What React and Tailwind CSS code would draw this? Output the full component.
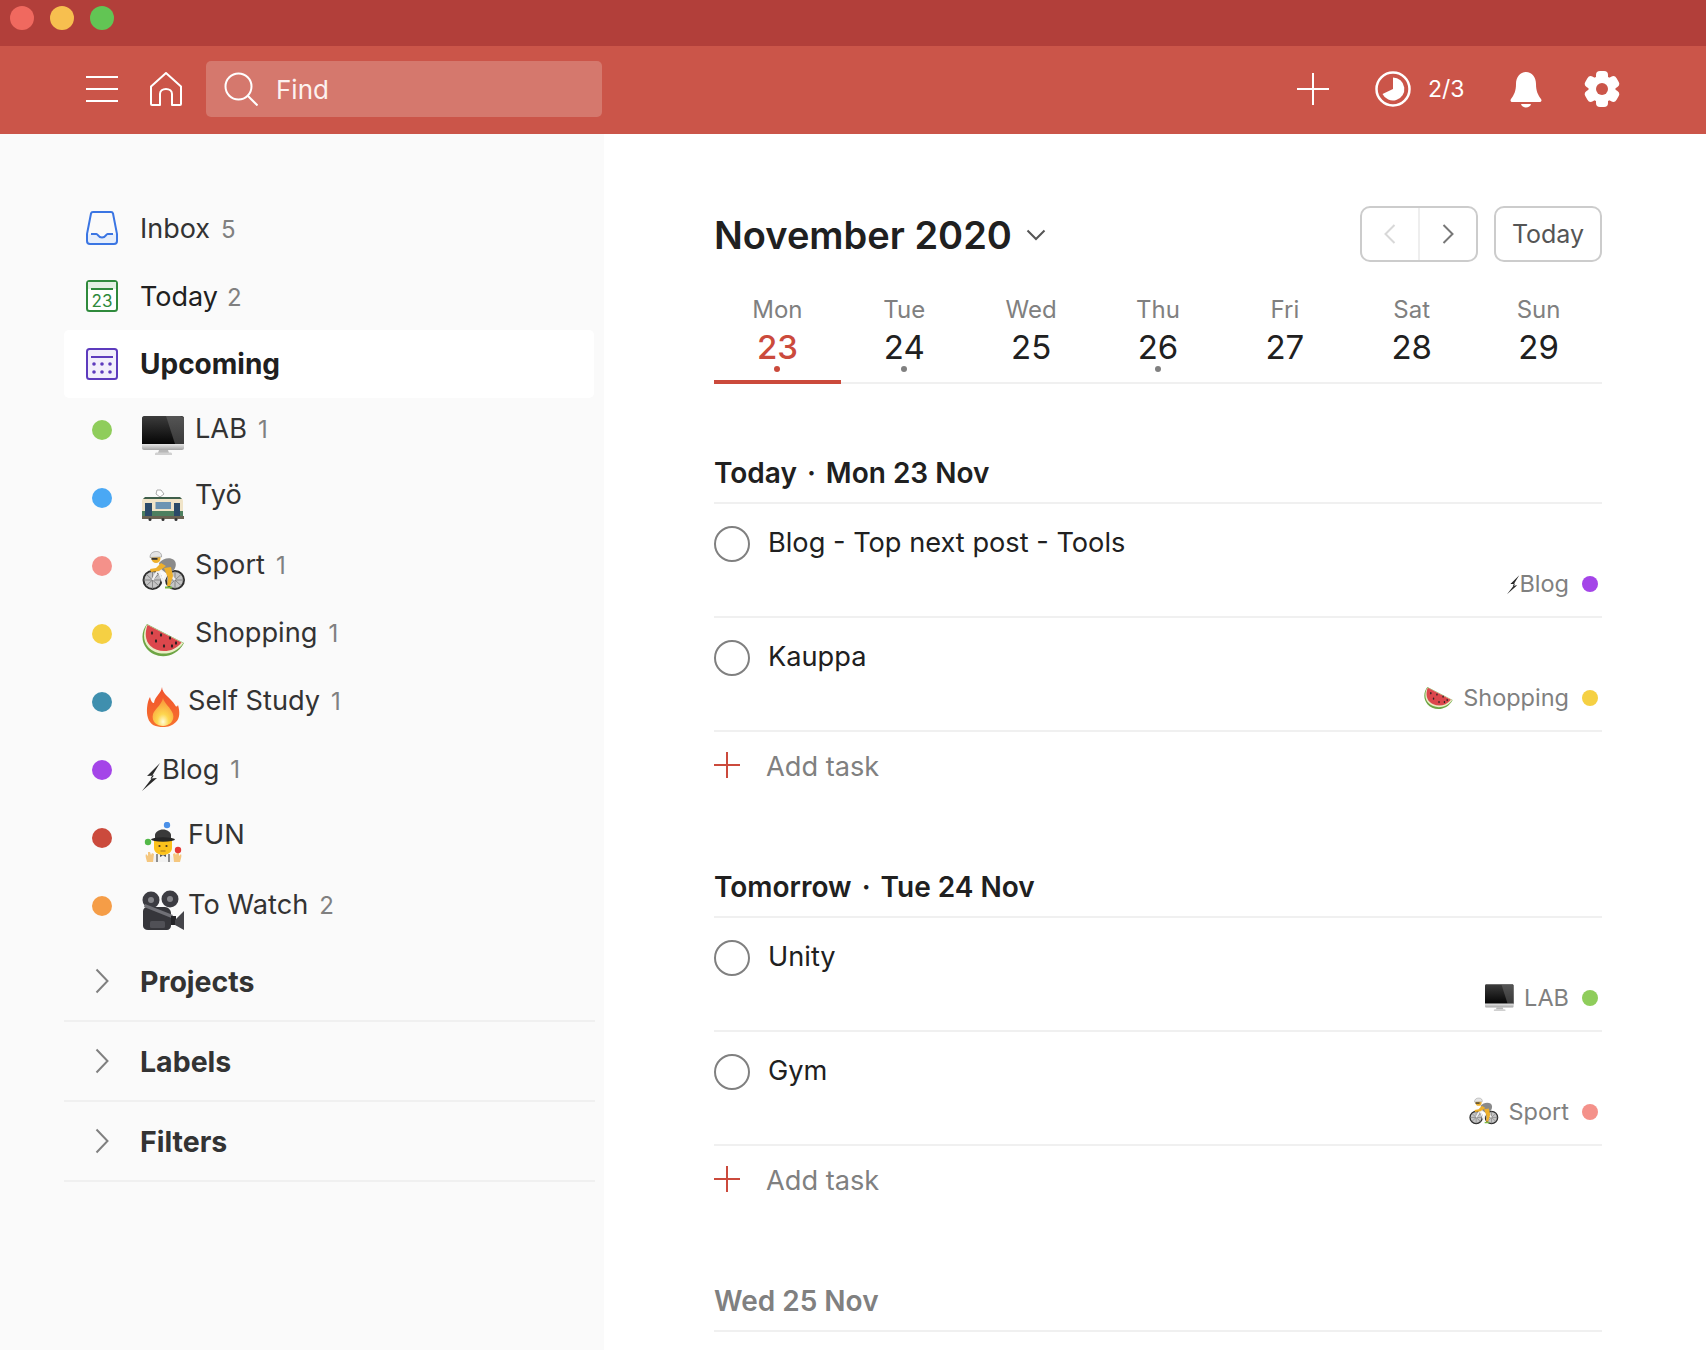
import React from 'react';

const Imac = ({ size = 44 }) => (
    <svg width={size} height={size} viewBox="0 0 44 44" className="shrink-0">
        <defs>
            <linearGradient id="imacScreen" x1="0" y1="0" x2="0" y2="1">
                <stop offset="0" stopColor="#3c3c3c" />
                <stop offset="1" stopColor="#030303" />
            </linearGradient>
            <linearGradient id="imacChin" x1="0" y1="0" x2="0" y2="1">
                <stop offset="0" stopColor="#e6e6e6" />
                <stop offset="1" stopColor="#a4a4a4" />
            </linearGradient>
        </defs>
        <path d="M17 36h9l1 3H16z" fill="#b8b8b8" />
        <path d="M13 39.500c0-.8 1-1 2-1h13c1 0 2 .2 2 1V41H13z" fill="#d0d0d0" />
        <path d="M0 4c0-1 .8-2 2-2h38c1.200 0 2 1 2 2v27H0z" fill="url(#imacScreen)" />
        <path d="M24 2h14l4 2v26h-9z" fill="#6d6d6d" opacity="0.5" />
        <path d="M0 30h42v4c0 1.200-.8 2-2 2H2c-1.200 0-2-.8-2-2z" fill="url(#imacChin)" />
    </svg>
);

const Tram = ({ size = 44 }) => (
    <svg width={size} height={size} viewBox="0 0 44 44" className="shrink-0">
        <path d="M15 8l4-0 3 4-4 3-4-3z" fill="#fff" stroke="#aaa" strokeWidth="1" />
        <path d="M0 36V19c0-2 2-3.500 4-3.500h33c2 0 4 1.500 4 3.500v17z" fill="#f0e4c8" />
        <path d="M3 15h35l2 2H1z" fill="#3f5f4b" />
        <rect x="0" y="29" width="41" height="5" fill="#4d7f5f" />
        <rect x="3" y="21" width="7" height="13" fill="#2b4a68" />
        <rect x="32" y="21" width="6" height="13" fill="#2b4a68" />
        <rect x="13.500" y="20" width="15.500" height="7" fill="#6c94b3" />
        <rect x="-1" y="34" width="43" height="3" fill="#6a6252" />
        <circle cx="8" cy="37.500" r="1.500" fill="#333" />
        <circle cx="21" cy="37.500" r="1.500" fill="#333" />
        <circle cx="34" cy="37.500" r="1.500" fill="#333" />
    </svg>
);

const Bike = ({ size = 44 }) => (
    <svg width={size} height={size} viewBox="0 0 44 44" className="shrink-0">
        <circle cx="10.500" cy="30" r="9" fill="#c4c4c4" stroke="#2e2e2e" strokeWidth="2" />
        <circle cx="33" cy="30" r="9" fill="#c4c4c4" stroke="#2e2e2e" strokeWidth="2" />
        <path d="M10.500 21v18M1.500 30h18M4 24l13 12M17 24L4 36M33 21v18M24 30h18M26.500 24l13 12M39.500 24l-13 12" stroke="#777" strokeWidth="0.8" />
        <path d="M10.500 30L16 20l10 2 7 8M16 20l5 12 5-10" stroke="#f1f1f1" strokeWidth="2.200" fill="none" />
        <path d="M17 13c4-5 11-6 15-3 3 3 2 8-1 11l-7 2-5-4z" fill="#8a8a8a" />
        <path d="M22 18l4 10-1 8h3l3-10-2-9z" fill="#eeb02c" />
        <path d="M19 13l-5 5-6 1 1 3 8-1 7-5z" fill="#eeb02c" />
        <circle cx="14" cy="8.500" r="4.500" fill="#eeb02c" />
        <path d="M8 7.500C8 3 11 1.500 14.500 1.500c3.500 0 5.500 2.500 5 5.500z" fill="#e4e4e4" stroke="#888" strokeWidth="0.6" />
        <rect x="9.500" y="8" width="6" height="1.800" fill="#333" />
        <rect x="23" y="36.500" width="7" height="2" fill="#79b542" />
    </svg>
);

const Melon = ({ size = 44 }) => (
    <svg width={size} height={size} viewBox="0 0 44 44" className="shrink-0">
        <path d="M5 6C0 12 -2 23 5 31c8 10 28 11 37-6z" fill="#6da544" />
        <path d="M5 6.500C1.500 13 0 22 6.500 29.500c8 8.500 26 9 35-4.500z" fill="#e9eec6" />
        <path d="M5.500 7C3 14 2.500 22 8.500 28c8 7.500 23 7 31-3.500z" fill="#dc474c" />
        <g fill="#2d2323">
            <ellipse cx="10" cy="15" rx="1.100" ry="1.700" />
            <ellipse cx="19" cy="17" rx="1.100" ry="1.700" />
            <ellipse cx="28" cy="20" rx="1.100" ry="1.700" />
            <ellipse cx="14" cy="23" rx="1.100" ry="1.700" />
            <ellipse cx="22" cy="28" rx="1.100" ry="1.700" />
            <ellipse cx="30" cy="28" rx="1.100" ry="1.700" />
            <ellipse cx="34" cy="25" rx="1.100" ry="1.700" />
        </g>
    </svg>
);

const Flame = ({ size = 44 }) => (
    <svg width={size} height={size} viewBox="0 0 44 44" className="shrink-0">
        <defs>
            <linearGradient id="flameOuter" x1="0" y1="0" x2="0" y2="1">
                <stop offset="0" stopColor="#f0512c" />
                <stop offset="1" stopColor="#f7722f" />
            </linearGradient>
            <radialGradient id="flameInner" cx="0.5" cy="0.85" r="0.8">
                <stop offset="0" stopColor="#fffbd8" />
                <stop offset="0.35" stopColor="#fdd64f" />
                <stop offset="1" stopColor="#f9943a" />
            </radialGradient>
        </defs>
        <path d="M20 1C20 8 29 12 33 19c1 2 2 2 3 0 2 7 2 13-2 17-4 4-8 5-13 5-7 0-13-2-15-9C4 26 5 16 8 11c1 4 2 6 4 6 1-7 7-9 8-16z" fill="url(#flameOuter)" />
        <path d="M21 12c1 5 8 10 10 16 2 7-4 12-10 12S9 36 11 28c2-5 9-10 10-16z" fill="url(#flameInner)" />
    </svg>
);

const Bolt = ({ size = 44 }) => (
    <svg width={size} height={size} viewBox="0 0 44 44" className="shrink-0">
        <path d="M18 9L5 22l7-.5L0 37 15 24l-6.500.5z" fill="#2a2a2a" />
    </svg>
);

const Juggler = ({ size = 44 }) => (
    <svg width={size} height={size} viewBox="0 0 44 44" className="shrink-0">
        <path d="M10 40c0-6 5-9 11-9s11 3 11 9z" fill="#f2f2f2" />
        <path d="M15 32v8M27 32v8" stroke="#666" strokeWidth="1.400" />
        <path d="M18 32l3 1.500 3-1.500v3l-3-1.500-3 1.500z" fill="#555" />
        <path d="M5 40c-1-4-2-6-1-8l2 2 0-4 2 0 1 3 1-2 2 1-1 8z" fill="#f5c77f" />
        <path d="M38 40c1-4 2-6 1-8l-2 2 0-4-2 0-1 3-1-2-2 1 1 8z" fill="#f5c77f" />
        <path d="M12 16h18v10c0 4-4 7-9 7s-9-3-9-7z" fill="#fcc21b" />
        <circle cx="17.500" cy="24" r="1.100" fill="#4a3520" />
        <circle cx="24.500" cy="24" r="1.100" fill="#4a3520" />
        <path d="M18.500 29h5" stroke="#a8761f" strokeWidth="1" />
        <path d="M13 13c0-3 4-5.500 8-5.500s8 2.500 8 5.500v4H13z" fill="#3a3a3a" />
        <ellipse cx="21" cy="17.500" rx="12" ry="2.200" fill="#262626" />
        <circle cx="25" cy="3" r="3.200" fill="#4a90e8" />
        <circle cx="6" cy="20" r="3.200" fill="#53b848" />
        <circle cx="36" cy="28" r="3.200" fill="#e53935" />
    </svg>
);

const MovieCam = ({ size = 44 }) => (
    <svg width={size} height={size} viewBox="0 0 44 44" className="shrink-0">
        <circle cx="9" cy="10" r="8.500" fill="#3c3c42" />
        <circle cx="28" cy="9" r="8.500" fill="#3c3c42" />
        <circle cx="9" cy="10" r="3" fill="#85858a" />
        <circle cx="28" cy="9" r="3" fill="#85858a" />
        <path d="M1 21c0-2 2-4 4-4h18c3 0 6 3 6 6v13c0 2-2 4-4 4H6c-3 0-5-2-5-4z" fill="#36363b" />
        <path d="M3 14l28 11-1.500 3L2 17z" fill="#707076" />
        <rect x="8" y="31" width="15" height="7" rx="1.500" fill="#505056" />
        <path d="M29 26h5v9h-5z" fill="#232327" />
        <path d="M33 30l9-9v19l-9-5z" fill="#45454a" />
    </svg>
);

const projects = [
    { name: 'LAB', count: 1, color: 'bg-[#8fcd5b]', Icon: Imac, label: 'ml-[9px] mb-[2px]' },
    { name: 'Työ', color: 'bg-[#4aa8f4]', Icon: Tram, label: 'ml-[9px] mb-[6px]' },
    { name: 'Sport', count: 1, color: 'bg-[#f4918a]', Icon: Bike, label: 'ml-[9px] mb-[2px]' },
    { name: 'Shopping', count: 1, color: 'bg-[#f5d043]', Icon: Melon, label: 'ml-[9px] mb-[2px]' },
    { name: 'Self Study', count: 1, color: 'bg-[#3f8fae]', Icon: Flame, label: 'ml-[2px] mb-[2px]' },
    { name: 'Blog', count: 1, color: 'bg-[#a445e8]', Icon: Bolt, label: '-ml-[24px]' },
    { name: 'FUN', color: 'bg-[#cb4a3c]', Icon: Juggler, label: 'ml-[2px] mb-[6px]' },
    { name: 'To Watch', count: 2, color: 'bg-[#f59d47]', Icon: MovieCam, label: 'ml-[2px] mb-[2px]' },
];

const days = [
    ['Mon', 23, true], ['Tue', 24, true], ['Wed', 25, false], ['Thu', 26, true],
    ['Fri', 27, false], ['Sat', 28, false], ['Sun', 29, false],
];

const Chevron = () => (
    <svg width="14" height="26" viewBox="0 0 14 26" fill="none" stroke="#808080" strokeWidth="2">
        <path d="M1.500 1.500L12.500 13 1.500 24.500" />
    </svg>
);

const Task = ({ title, label, Icon, dot, ml }) => (
    <div className="h-[114px] box-border border-b-2 border-[#f0f0f0] pt-[22px]">
        <div className="flex items-center gap-[18px]">
            <div className="w-[36px] h-[36px] rounded-full border-2 border-[#808080]" />
            <span className="text-[27.2px] leading-[36px] text-[#202020] -mt-[2px]">{title}</span>
        </div>
        <div className="mt-[7px] flex items-center justify-end h-[30px] pr-[4px] text-[23.500px] text-[#808080]">
            <Icon size={30} />
            <span className={ml}>{label}</span>
            <span className={`ml-[13px] w-[16px] h-[16px] rounded-full ${dot}`} />
        </div>
    </div>
);

const Heading = ({ title, date }) => (
    <div className={`mt-[60px] h-[60px] box-border border-b-2 border-[#f0f0f0] flex items-center text-[28px] font-semibold ${title ? 'text-[#202020]' : 'text-[#808080]'}`}>
        {title && <span>{title}</span>}
        {title && <span className="mx-[10px]">·</span>}
        <span>{date}</span>
    </div>
);

const AddTask = () => (
    <div className="h-[66px] flex items-center">
        <svg width="26" height="26" viewBox="0 0 26 26" stroke="#cb4a3c" strokeWidth="2">
            <path d="M13 0v26M0 13h26" />
        </svg>
        <span className="ml-[26px] mt-[4px] text-[27.2px] text-[#808080]">Add task</span>
    </div>
);

export default function App() {
    return (
        <div className="w-[1706px] h-[1350px] overflow-hidden bg-white font-['Inter',sans-serif] flex flex-col">
            <div className="h-[46px] shrink-0 bg-[#b23f3a] flex items-start gap-[16px] pl-[10px] pt-[6px]">
                <div className="w-[24px] h-[24px] rounded-full bg-[#f0695f]" />
                <div className="w-[24px] h-[24px] rounded-full bg-[#f7bf4f]" />
                <div className="w-[24px] h-[24px] rounded-full bg-[#62c554]" />
            </div>

            <header className="h-[88px] box-border pb-[2px] shrink-0 bg-[#cb5549] flex items-center pl-[86px] pr-[86px] text-white">
                <svg width="32" height="28" viewBox="0 0 32 28" stroke="#fff" strokeWidth="2">
                    <path d="M0 2h32M0 14h32M0 26h32" />
                </svg>
                <svg className="ml-[32px]" width="32" height="34" viewBox="0 0 32 34" fill="none" stroke="#fff" strokeWidth="2" strokeLinejoin="round">
                    <path d="M1 14.500L16 1l15 13.500V32c0 .6-.4 1-1 1h-8V22c0-3-2.500-5-6-5s-6 2-6 5v11H2c-.6 0-1-.4-1-1z" />
                </svg>
                <div className="ml-[24px] w-[396px] h-[56px] rounded-[5px] bg-[#d5786d] flex items-center pl-[18px]">
                    <svg width="34" height="34" viewBox="0 0 34 34" fill="none" stroke="#fff" strokeWidth="2">
                        <circle cx="14.500" cy="14.500" r="13" />
                        <path d="M24 24l9.500 9.500" />
                    </svg>
                    <span className="ml-[18px] text-[26px] text-[#fdf2f0]">Find</span>
                </div>
                <div className="ml-auto flex items-center">
                    <svg width="32" height="32" viewBox="0 0 32 32" stroke="#fff" strokeWidth="2">
                        <path d="M16 0v32M0 16h32" />
                    </svg>
                    <svg className="ml-[46px]" width="36" height="36" viewBox="0 0 36 36">
                        <circle cx="18" cy="18" r="16.500" fill="none" stroke="#fff" strokeWidth="2.500" />
                        <path d="M18 18V6.500A11.500 11.500 0 1 1 7.500 23z" fill="#fff" />
                    </svg>
                    <span className="ml-[17px] text-[23px] w-[70px]">2/3</span>
                    <svg className="ml-[12px]" width="32" height="37" viewBox="0 0 32 37" fill="#fff">
                        <path d="M16 1c6 0 10 5 10 12 0 7 2 11 5 15 1 1.500.5 3-1.500 3h-27C.5 31 0 29.500 1 28c3-4 5-8 5-15C6 6 10 1 16 1z" />
                        <path d="M11 33h10c-.5 2-2.500 3.500-5 3.500S11.500 35 11 33z" />
                    </svg>
                    <svg className="ml-[42px]" width="36" height="36" viewBox="0 0 36 36">
                        <g fill="#fff">
                            <rect x="12" y="0" width="12" height="36" rx="4" />
                            <rect x="12" y="0" width="12" height="36" rx="4" transform="rotate(60 18 18)" />
                            <rect x="12" y="0" width="12" height="36" rx="4" transform="rotate(120 18 18)" />
                            <circle cx="18" cy="18" r="13.500" />
                        </g>
                        <circle cx="18" cy="18" r="6" fill="#cb5549" />
                    </svg>
                </div>
            </header>

            <div className="flex flex-1 min-h-0">
                <aside className="w-[604px] shrink-0 bg-[#fafafa] pt-[60px] pl-[64px] pr-[10px]">
                    <div className="h-[68px] flex items-center pl-[22px]">
                        <svg width="32" height="34" viewBox="0 0 32 34" fill="none">
                            <path d="M1 23h9l2.500 3h7l2.500-3h9v7c0 2-1 3-3 3H4c-2 0-3-1-3-3z" fill="#e6eefb" />
                            <path d="M7 1h18c1 0 1.800.6 2 1.500L31 23v7c0 2-1 3-3 3H4c-2 0-3-1-3-3v-7L5 2.500C5.200 1.600 6 1 7 1z" stroke="#3a75e3" strokeWidth="2" />
                            <path d="M5 23h5.500c1.500 0 1.500 3.500 5.500 3.500s4-3.500 5.500-3.500H27" stroke="#3a75e3" strokeWidth="2" />
                        </svg>
                        <span className="ml-[22px] mt-[2px] text-[27px] text-[#333]">Inbox</span>
                        <span className="ml-[11px] mt-[4px] text-[24px] text-[#808080]">5</span>
                    </div>
                    <div className="h-[68px] flex items-center pl-[22px]">
                        <svg width="32" height="32" viewBox="0 0 32 32" fill="none">
                            <rect x="1" y="1" width="30" height="30" rx="2.500" fill="#fff" stroke="#2f8a3c" strokeWidth="2" />
                            <rect x="2" y="2" width="28" height="7" fill="#e3f0e3" />
                            <path d="M5 9h22" stroke="#2f8a3c" strokeWidth="2" />
                            <text x="16" y="27" textAnchor="middle" fontFamily="Inter" fontSize="17" fill="#2f8a3c">23</text>
                        </svg>
                        <span className="ml-[22px] mt-[2px] text-[27px] text-[#202020]">Today</span>
                        <span className="ml-[9px] mt-[4px] text-[24px] text-[#808080]">2</span>
                    </div>
                    <div className="h-[68px] flex items-center pl-[22px] bg-white rounded-[5px]">
                        <svg width="32" height="32" viewBox="0 0 32 32" fill="none">
                            <rect x="1" y="1" width="30" height="30" rx="2.500" fill="#f2effb" stroke="#5d3bbd" strokeWidth="2" />
                            <path d="M5 9h22" stroke="#5d3bbd" strokeWidth="2" />
                            <g fill="#5d3bbd">
                                <circle cx="8" cy="16" r="1.800" /><circle cx="16" cy="16" r="1.800" /><circle cx="24" cy="16" r="1.800" />
                                <circle cx="8" cy="24" r="1.800" /><circle cx="16" cy="24" r="1.800" /><circle cx="24" cy="24" r="1.800" />
                            </g>
                        </svg>
                        <span className="ml-[22px] text-[28px] font-bold text-[#202020]">Upcoming</span>
                    </div>

                    <div className="-mt-[2px]">
                        {projects.map(({ name, count, color, Icon, label }) => (
                            <div key={name} className="h-[68px] flex items-center pl-[28px]">
                                <span className={`w-[20px] h-[20px] rounded-full shrink-0 ${color}`} />
                                <div className="ml-[30px] mt-[12px]">
                                    <Icon />
                                </div>
                                <span className={`${label} text-[27.2px] text-[#333]`}>{name}</span>
                                {count && <span className="ml-[11px] text-[24px] text-[#808080]">{count}</span>}
                            </div>
                        ))}
                    </div>

                    <div className="mt-[2px]">
                        {['Projects', 'Labels', 'Filters'].map((label) => (
                            <div key={label} className="h-[80px] box-border border-b-2 border-[#f0f0f0] flex items-center pl-[31px] -mr-[1px]">
                                <Chevron />
                                <span className="ml-[31px] text-[28.500px] font-bold text-[#333] mt-[2px]">{label}</span>
                            </div>
                        ))}
                    </div>
                </aside>

                <main className="flex-1 pl-[110px] pr-[104px]">
                    <div className="mt-[72px] h-[56px] flex items-center">
                        <h1 className="mt-[2px] text-[38px] font-semibold text-[#202020]">November 2020</h1>
                        <svg className="ml-[14px] mt-[2px]" width="20" height="12" viewBox="0 0 20 12" fill="none" stroke="#555" strokeWidth="2">
                            <path d="M1.500 1.500L10 10l8.500-8.500" />
                        </svg>
                        <div className="ml-auto w-[118px] h-[56px] box-border border-2 border-[#cccccc] rounded-[10px] flex">
                            <div className="w-[58px] border-r-2 border-[#eeeeee] flex items-center justify-center">
                                <svg width="12" height="20" viewBox="0 0 12 20" fill="none" stroke="#d8d8d8" strokeWidth="2">
                                    <path d="M10.500 1L1.500 10l9 9" />
                                </svg>
                            </div>
                            <div className="flex-1 flex items-center justify-center">
                                <svg width="12" height="20" viewBox="0 0 12 20" fill="none" stroke="#777" strokeWidth="2">
                                    <path d="M1.500 1l9 9-9 9" />
                                </svg>
                            </div>
                        </div>
                        <div className="ml-[16px] w-[108px] h-[56px] box-border border-2 border-[#cccccc] rounded-[10px] flex items-center justify-center pt-[2px] text-[25px] text-[#555]">
                            Today
                        </div>
                    </div>

                    <div className="mt-[32px] h-[90px] box-border border-b-2 border-[#f0f0f0] flex">
                        {days.map(([name, num, hasDot], i) => (
                            <div key={name} className={`flex-1 h-[90px] box-border flex flex-col items-center pt-[1px] ${i === 0 ? 'border-b-4 border-[#cb4a3c]' : ''}`}>
                                <span className="h-[30px] leading-[30px] text-[24px] text-[#808080]">{name}</span>
                                <span className={`h-[43px] leading-[44px] text-[33px] ${i === 0 ? 'text-[#cb4a3c] font-medium' : 'text-[#202020]'}`}>{num}</span>
                                {hasDot && <span className={`-mt-[2px] w-[6px] h-[6px] rounded-full ${i === 0 ? 'bg-[#cb4a3c]' : 'bg-[#808080]'}`} />}
                            </div>
                        ))}
                    </div>

                    <Heading title="Today" date="Mon 23 Nov" />
                    <Task title="Blog - Top next post - Tools" label="Blog" Icon={Bolt} dot="bg-[#a445e8]" ml="-ml-[18px]" />
                    <Task title="Kauppa" label="Shopping" Icon={Melon} dot="bg-[#f5d043]" ml="ml-[9px]" />
                    <AddTask />

                    <Heading title="Tomorrow" date="Tue 24 Nov" />
                    <Task title="Unity" label="LAB" Icon={Imac} dot="bg-[#8fcd5b]" ml="ml-[9px]" />
                    <Task title="Gym" label="Sport" Icon={Bike} dot="bg-[#f4918a]" ml="ml-[10px]" />
                    <AddTask />

                    <Heading date="Wed 25 Nov" />
                </main>
            </div>
        </div>
    );
}
